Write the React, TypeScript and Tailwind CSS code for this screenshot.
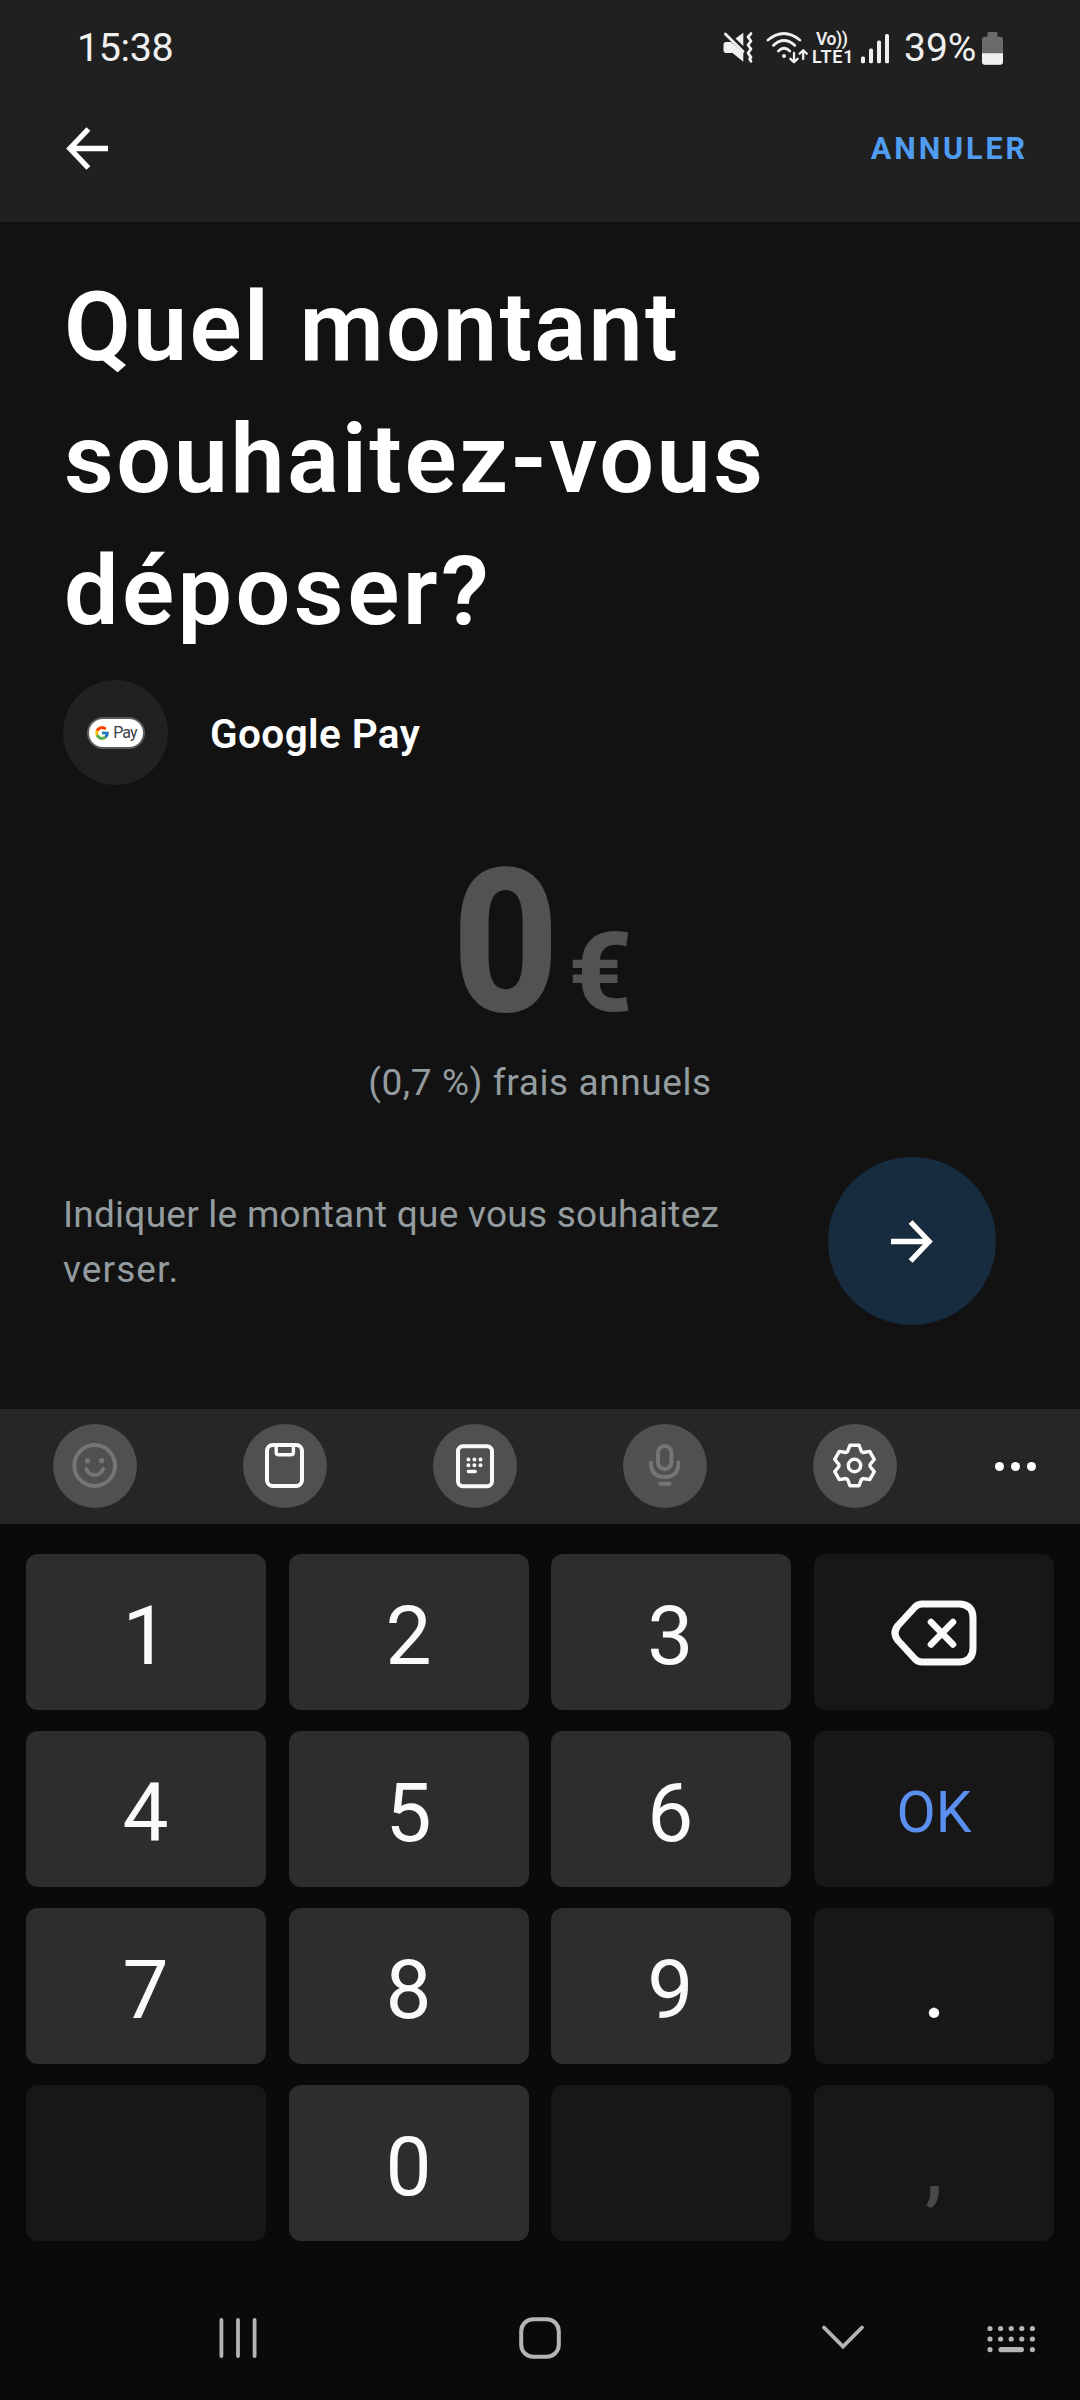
import type { ReactNode } from "react";
import { FcGoogle } from "react-icons/fc";

function MuteIcon() {
  return (
    <svg className="w-[30px] h-[34px]" viewBox="0 0 30 34" fill="#f0f0f0">
      <path d="M3 11H8L20.3 22V30.7L9.5 22H3Q.5 22 .5 19V14Q.5 11 3 11Z" />
      <path d="M12.5 7.5L20.3 1.7V15Z" />
      <path d="M2.4 3L20 20.6" stroke="#f0f0f0" strokeWidth="2.8" strokeLinecap="round" />
      <path
        d="M28 2.6L25 6L28 10L25 14L28 18L25 22L28 26.4L26.6 28L28 30.4"
        fill="none"
        stroke="#f0f0f0"
        strokeWidth="2.8"
        strokeLinecap="round"
        strokeLinejoin="round"
      />
    </svg>
  );
}

function WifiIcon() {
  return (
    <svg
      className="w-[44px] h-[34px]"
      viewBox="0 0 44 34"
      fill="none"
      stroke="#f0f0f0"
      strokeWidth="2.8"
      strokeLinecap="round"
      strokeLinejoin="round"
    >
      <path d="M2 9Q17.8-4 33.8 9" />
      <path d="M7.4 14.4Q18 4.6 28.8 14.4" />
      <path d="M12.4 20Q18 14.4 23.8 20" />
      <circle cx="18" cy="25" r="2" fill="#f0f0f0" stroke="none" />
      <path d="M28 22V31M24.4 27.8L28 31.2L31.6 27.8" strokeWidth="2.3" />
      <path d="M37.2 28V19.6M33.6 22.8L37.2 19.2L40.8 22.8" strokeWidth="2.3" />
    </svg>
  );
}

function SignalIcon() {
  return (
    <svg className="w-[28px] h-[33px]" viewBox="0 0 28 33" fill="#f0f0f0">
      <rect x="0" y="24.5" width="4" height="6.8" rx="1.5" />
      <rect x="8" y="16.5" width="4" height="14.8" rx="1.5" />
      <rect x="16" y="8.5" width="4" height="22.8" rx="1.5" />
      <rect x="24" y="2" width="4" height="29.3" rx="1.5" />
    </svg>
  );
}

function BatteryIcon() {
  return (
    <svg className="w-[21px] h-[33px]" viewBox="0 0 21 33">
      <rect x="5.5" y="0" width="10" height="8" rx="1.5" fill="#6b6b6b" />
      <rect x="0" y="4.7" width="21" height="28" rx="3" fill="#6b6b6b" />
      <path d="M0 21.3H21V29.7Q21 32.7 18 32.7H3Q0 32.7 0 29.7Z" fill="#f0f0f0" />
    </svg>
  );
}

function StatusBar() {
  return (
    <div className="flex items-center justify-between h-24 pl-[77px] pr-[77px] text-[#f0f0f0]">
      <span className="text-[39.5px] leading-none tracking-[-0.4px]">15:38</span>
      <div className="flex items-center">
        <MuteIcon />
        <span className="ml-[13px] flex">
          <WifiIcon />
        </span>
        <div className="ml-[2px] w-10 flex flex-col font-semibold whitespace-nowrap">
          <span className="pl-[4px] text-[17.5px] leading-[17px] tracking-[-0.4px]">Vo))</span>
          <span className="text-[18px] leading-[18px] tracking-[0.8px]">LTE1</span>
        </div>
        <span className="ml-[9px] flex">
          <SignalIcon />
        </span>
        <span className="ml-[15px] w-[78px] text-[39px] leading-none">39%</span>
        <BatteryIcon />
      </div>
    </div>
  );
}

function Header() {
  return (
    <header className="bg-[#202020] h-[222px]">
      <StatusBar />
      <div className="flex items-center justify-between h-[126px] pb-[22px] pl-[66px] pr-[52px]">
        <button>
          <svg className="w-[42px] h-[43px]" viewBox="0 0 42 43" fill="none" stroke="#fff" strokeWidth="5.4">
            <path d="M22.4 2L3.9 21.5L22.4 41M6 21.5H42" />
          </svg>
        </button>
        <button className="pt-[2px] text-[30.5px] leading-none font-bold tracking-[2.9px] text-[#4f9cf0]">
          ANNULER
        </button>
      </div>
    </header>
  );
}

function GooglePayBadge() {
  return (
    <div className="w-[105px] h-[105px] rounded-full bg-[#212121] flex items-center justify-center">
      <div className="w-[58px] h-8 rounded-full border-2 border-[#5c5c5c] bg-white flex items-center justify-center gap-[3px]">
        <FcGoogle className="w-4 h-4" />
        <span className="text-[16px] leading-none tracking-[-0.9px] text-[#3c4043]">Pay</span>
      </div>
    </div>
  );
}

function DepositForm() {
  return (
    <main className="bg-[#121212] h-[1187px] pt-[39px]">
      <h1 className="pl-[64px] text-[97px] leading-[132px] font-semibold text-white">
        <span className="block tracking-[2.2px] [word-spacing:2px]">Quel montant</span>
        <span className="block tracking-[2.5px]">souhaitez-vous</span>
        <span className="block tracking-[3.4px]">déposer?</span>
      </h1>

      <div className="mt-[23px] pl-[63px] flex items-center gap-[42px]">
        <GooglePayBadge />
        <span className="pt-[3px] text-[40.5px] leading-none font-semibold tracking-[0.4px] text-white">
          Google Pay
        </span>
      </div>

      <div className="mt-[58px] h-[200px] flex items-baseline justify-center gap-[5px] text-[#525252]">
        <span className="text-[200px] leading-[200px] font-extrabold scale-x-[0.93]">0</span>
        <span className="text-[112px] leading-none font-extrabold">€</span>
      </div>
      <p className="mt-[15px] text-center text-[37px] leading-[50px] tracking-[0.6px] text-[#949c9f]">
        (0,7 %) frais annuels
      </p>

      <div className="mt-[49px] pl-[63px] pr-[84px] flex items-center justify-between">
        <p className="pt-[2px] text-[37px] leading-[55px] text-[#949c9f]">
          <span className="block tracking-[0.25px]">Indiquer le montant que vous souhaitez</span>
          <span className="block tracking-[1.1px]">verser.</span>
        </p>
        <button className="w-[168px] h-[168px] rounded-full bg-[#172c3e] flex items-center justify-center">
          <svg className="w-[42px] h-[43px]" viewBox="0 0 42 43" fill="none" stroke="#fff" strokeWidth="5.4">
            <path d="M19.6 2L38.1 21.5L19.6 41M36 21.5H0" />
          </svg>
        </button>
      </div>
    </main>
  );
}

// Six-toothed gear outline around (41.5, 41.5)
function gearPoints() {
  const tooth = [
    [-4.6, -20.2],
    [4.6, -20.2],
    [6.9, -14],
    [8.7, -13],
  ];
  const points: string[] = [];
  for (let i = 0; i < 6; i++) {
    const a = (i * Math.PI) / 3;
    for (const [x, y] of tooth) {
      const px = 41.5 + x * Math.cos(a) - y * Math.sin(a);
      const py = 41.5 + x * Math.sin(a) + y * Math.cos(a);
      points.push(`${px.toFixed(2)},${py.toFixed(2)}`);
    }
  }
  return points.join(" ");
}

const toolbarIcons: { id: string; color: string; icon: ReactNode }[] = [
  {
    id: "emoji",
    color: "text-[#757575]",
    icon: (
      <>
        <circle cx="41.7" cy="41.5" r="20.4" />
        <circle cx="34.4" cy="36.7" r="2.6" fill="currentColor" stroke="none" />
        <circle cx="48.6" cy="36.7" r="2.6" fill="currentColor" stroke="none" />
        <path d="M33.2 45Q36 51 41.6 51Q47.4 51 50.2 45" />
      </>
    ),
  },
  {
    id: "clipboard",
    color: "text-[#fafafa]",
    icon: (
      <>
        <rect x="24" y="21" width="35" height="41" rx="6" />
        <path d="M33.2 21V28.4Q33.2 30.8 35.6 30.8H48Q50.4 30.8 50.4 28.4V21" strokeWidth="3.4" />
      </>
    ),
  },
  {
    id: "keypad",
    color: "text-[#fafafa]",
    icon: (
      <>
        <rect x="25" y="22.3" width="34" height="40" rx="5" />
        <path d="M35.4 35.4h.01M41.4 35.4h.01M47.5 35.4h.01M35.4 41.3h.01M41.4 41.3h.01M47.5 41.3h.01" />
        <path d="M35.4 47.5H42.2" strokeWidth="3.4" />
      </>
    ),
  },
  {
    id: "voice",
    color: "text-[#757575]",
    icon: (
      <>
        <rect x="35" y="22" width="13.4" height="23" rx="6.7" />
        <path d="M28 38.5Q28 53 41.7 53Q55.4 53 55.4 38.5" />
        <path d="M37 59.7H46.6" />
      </>
    ),
  },
  {
    id: "settings",
    color: "text-[#fafafa]",
    icon: (
      <>
        <polygon points={gearPoints()} strokeWidth="3.4" />
        <circle cx="41.5" cy="41.5" r="6.2" strokeWidth="3.4" />
      </>
    ),
  },
];

function Toolbar() {
  return (
    <div className="bg-[#262626] h-[115px] pb-[2px] flex items-center">
      {toolbarIcons.map((item) => (
        <div key={item.id} className="w-[190px] flex justify-center">
          <button className={"w-[84px] h-[84px] rounded-full bg-[#505050] " + item.color}>
            <svg
              className="w-[84px] h-[84px]"
              viewBox="0 0 84 84"
              fill="none"
              stroke="currentColor"
              strokeWidth="4"
              strokeLinecap="round"
              strokeLinejoin="round"
            >
              {item.icon}
            </svg>
          </button>
        </div>
      ))}
      <div className="w-[130px] pt-[2px] flex justify-center gap-[7px]">
        <span className="w-[9px] h-[9px] rounded-full bg-white" />
        <span className="w-[9px] h-[9px] rounded-full bg-white" />
        <span className="w-[9px] h-[9px] rounded-full bg-white" />
      </div>
    </div>
  );
}

function BackspaceIcon() {
  return (
    <svg
      className="w-[86px] h-[66px]"
      viewBox="0 0 86 66"
      fill="none"
      stroke="#fafafa"
      strokeWidth="7"
      strokeLinecap="round"
      strokeLinejoin="round"
    >
      <path d="M31 4H69Q82 5 82 18V48Q82 61 69 62H31Q27 62 24 59L7 40.5Q1 33 7 25.5L24 7Q27 4 31 4Z" />
      <path d="M40 22L62 44.5M62 22L40 44.5" strokeWidth="6.6" />
    </svg>
  );
}

const keys: { id: string; label: ReactNode; style: string }[] = [
  { id: "1", label: "1", style: "bg-[#2d2d2d] pt-[7px] pr-px" },
  { id: "2", label: "2", style: "bg-[#2d2d2d] pt-[7px]" },
  { id: "3", label: "3", style: "bg-[#2d2d2d] pt-[7px] pr-[2px]" },
  { id: "backspace", label: <BackspaceIcon />, style: "bg-[#171717] pt-px" },
  { id: "4", label: "4", style: "bg-[#2d2d2d] pt-[7px] pr-px" },
  { id: "5", label: "5", style: "bg-[#2d2d2d] pt-[7px]" },
  { id: "6", label: "6", style: "bg-[#2d2d2d] pt-[7px] pr-[2px]" },
  { id: "ok", label: <span className="text-[57px] leading-none text-[#5b8ff0]">OK</span>, style: "bg-[#171717] pt-[7px]" },
  { id: "7", label: "7", style: "bg-[#2d2d2d] pt-[7px] pr-px" },
  { id: "8", label: "8", style: "bg-[#2d2d2d] pt-[7px]" },
  { id: "9", label: "9", style: "bg-[#2d2d2d] pt-[7px] pr-[2px]" },
  { id: "dot", label: <span className="text-[78px] font-['Inter','Roboto',sans-serif]">.</span>, style: "bg-[#171717] pt-[7px]" },
  { id: "empty-left", label: "", style: "bg-[#171717]" },
  { id: "0", label: "0", style: "bg-[#2d2d2d] pt-[7px]" },
  { id: "empty-right", label: "", style: "bg-[#171717]" },
  { id: "comma", label: <span className="font-medium text-[#484848]">,</span>, style: "bg-[#171717] pt-[7px]" },
];

function NavBar() {
  return (
    <nav className="mt-[72px] pl-[216px] flex items-center text-[#b5b5b5]">
      <svg className="w-11 h-[50px]" viewBox="0 0 44 50" stroke="currentColor" strokeWidth="3.8" strokeLinecap="round">
        <path d="M5.4 7V43M22 7V43M38.6 7V43" />
      </svg>
      <svg className="ml-[258px] w-11 h-[50px]" viewBox="0 0 44 50" fill="none" stroke="currentColor" strokeWidth="4">
        <rect x="3.2" y="6.2" width="37.6" height="37.6" rx="12" />
      </svg>
      <svg
        className="ml-[259px] w-11 h-[50px]"
        viewBox="0 0 44 50"
        fill="none"
        stroke="currentColor"
        strokeWidth="3.8"
        strokeLinecap="round"
      >
        <path d="M3 14.5L22 33.5L41 14.5" />
      </svg>
      <svg className="ml-[121px] w-[50px] h-[50px]" viewBox="0 0 50 50" stroke="currentColor" strokeWidth="5.2" strokeLinecap="round">
        <path d="M4 15.5h.01M14.6 15.5h.01M25.2 15.5h.01M35.8 15.5h.01M46.4 15.5h.01" />
        <path d="M4 26h.01M14.6 26h.01M25.2 26h.01M35.8 26h.01M46.4 26h.01" />
        <path d="M4 36.6h.01M15 36.6H35.4M46.4 36.6h.01" />
      </svg>
    </nav>
  );
}

function Keyboard() {
  return (
    <section className="bg-[#0a0a0a] h-[991px]">
      <Toolbar />
      <div className="pt-[30px] px-[26px] grid grid-cols-[repeat(4,240px)] justify-between gap-y-[21px]">
        {keys.map((key) => (
          <button
            key={key.id}
            className={
              "h-[156px] rounded-xl flex items-center justify-center text-[82px] leading-none text-[#fafafa] " + key.style
            }
          >
            {key.label}
          </button>
        ))}
      </div>
      <NavBar />
    </section>
  );
}

export default function App() {
  return (
    <div className="w-[1080px] h-[2400px] overflow-hidden bg-[#121212] font-['Roboto',sans-serif]">
      <Header />
      <DepositForm />
      <Keyboard />
    </div>
  );
}
